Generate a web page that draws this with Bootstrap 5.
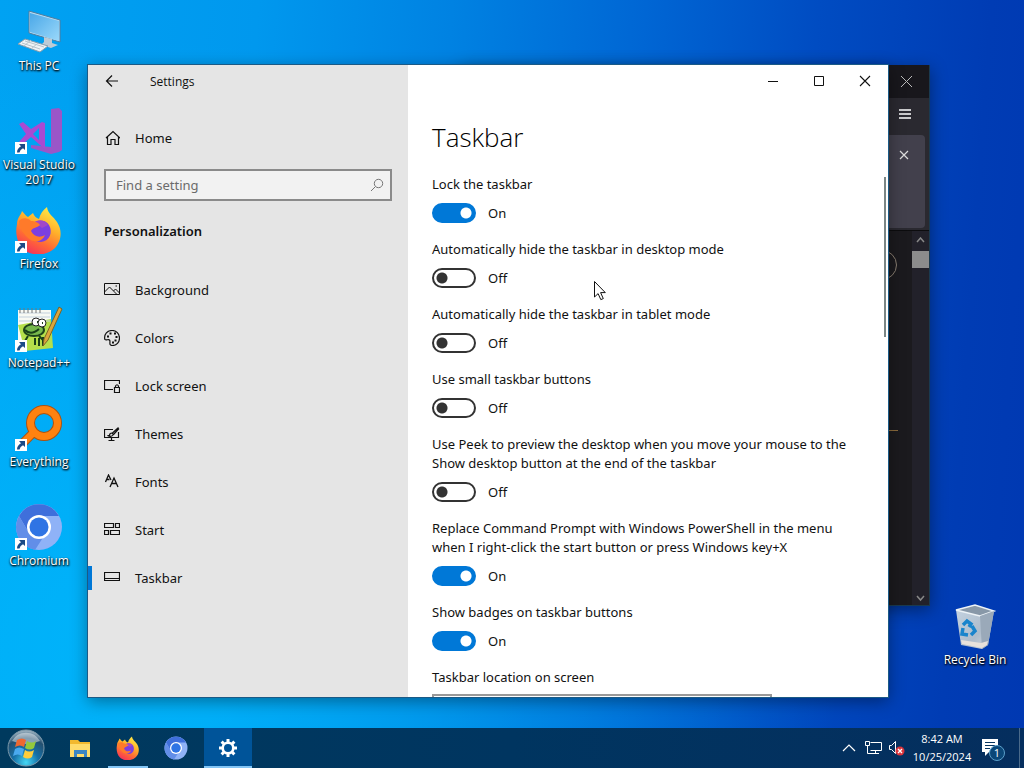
<!DOCTYPE html>
<html lang="en">
<head>
<meta charset="utf-8">
<meta name="viewport" content="width=device-width, initial-scale=1">
<title>Settings</title>
<link href="https://cdn.jsdelivr.net/npm/bootstrap@5.3.0/dist/css/bootstrap.min.css" rel="stylesheet">
<style>
:root { --ui-font: "Noto Sans", "Open Sans", sans-serif; --small-font: "Open Sans", "Noto Sans", sans-serif; --accent: #0078d7; }
body { font-family: var(--ui-font); font-size: 13px; line-height: 19px; color: #111; }
svg { display: block; flex: none; }
button { font: inherit; color: inherit; }
.desktop {
  background:
    radial-gradient(ellipse 68% 80% at 14% 85%, rgba(0,190,255,.7), rgba(0,170,255,0) 100%),
    linear-gradient(94deg, #00a2f2 0%, #0098ee 24%, #0082e2 42%, #0066d4 60%, #004cc2 76%, #003cb4 92%, #0038b2 100%);
}
/* desktop shortcuts */
.shortcut { width: 78px; height: 99px; padding-top: 8px; gap: 2px; font-family: var(--small-font); font-size: 12px; line-height: 15px;
  color: #fff; text-align: center; text-decoration: none; text-shadow: 1px 1px 2px #000, 0 1px 2px #000; }
.shortcut .glyph { position: relative; }
.shortcut .arrow { position: absolute; left: 0; bottom: 1px; }
.bin-spot { right: 10px; bottom: 35px; }
/* windows */
.win { box-shadow: 0 4px 16px rgba(0,0,0,.4); }
.win-back { left: 45%; right: 94px; top: 65px; bottom: 122px; background: #1b1a1e; color: #fbfbfe; border: 1px solid #1a3a50; border-width: 0 1px 1px 0; }
.win-front { left: 88px; right: 136px; top: 65px; bottom: 31px; background: #fff; outline: 1px solid #1b5a86; }
.back-title { height: 33px; background: #18171c; padding-right: 14px; }
.back-bar { height: 37px; background: #2a2930; padding: 9px 15px 0 0; }
.back-tabs { height: 96px; background: #2a2930; padding-right: 4px; border-bottom: 1px solid #0c0c0e; }
.back-card { height: 93px; background: #42404c; border-radius: 4px; padding: 14px 15px 0 0; }
.back-scroll { width: 17px; background: #22212a; padding: 6px 0 3px; }
.back-thumb { height: 17px; background: #8c8c8c; margin-top: 8px; }
.back-ring { width: 30px; height: 30px; border: 1px solid #8a7f72; border-radius: 50%; margin: 19px 15px 0 0; }
.back-rule { width: 34px; height: 1px; background: #8a6a3c; margin: 150px 14px 0 0; }
/* settings */
.side { width: 320px; background: #e5e5e5; }
.side-title { height: 32px; font-family: var(--small-font); font-size: 12px; padding-left: 16px; gap: 30px; }
.side-home { height: 48px; margin-top: 17px; padding-left: 16px; gap: 15px; color: inherit; text-decoration: none; }
.find { height: 32px; margin: 7px 16px 0; border: 2px solid #8a8a8a; background: #f2f2f2; padding: 0 6px 0 10px; }
.find input { border: 0; outline: 0; background: none; font-size: 13px; padding: 0; min-width: 0; }
.find input::placeholder { color: #6b6b6b; }
.side-head { font-size: 13px; font-weight: 600; line-height: 20px; margin: 20px 16px 25px; }
.side-link { height: 48px; padding-left: 12px; gap: 15px; border-left: 4px solid transparent; color: inherit; text-decoration: none; position: relative; }
.side-link.current::before { content: ""; position: absolute; left: -4px; top: 12px; width: 4px; height: 24px; background: var(--accent); }
.cap-btn { width: 46px; height: 32px; border: 0; background: none; padding: 0; }
.pane { padding: 22px 24px 0; }
.pane h1 { font-family: var(--small-font); font-size: 26px; font-weight: 300; line-height: 36px; margin: 0 0 20px; color: #000; }
.setting { margin-bottom: 17px; }
.setting .name { display: block; margin-bottom: 9px; }
.toggle.form-check-input { width: 44px; height: 20px; margin: 0 12px 0 0; float: none; border: 2px solid #333; border-radius: 10px;
  background: radial-gradient(circle at 8px 8px, #333 5px, transparent 6px) #fff; }
.toggle.form-check-input:checked { border-color: var(--accent); background: radial-gradient(circle at 32px 8px, #fff 5px, transparent 6px) var(--accent); }
.place { width: 340px; height: 32px; border: 2px solid #999; border-radius: 0; padding: 0 10px; margin-top: -2px; background-color: #fff; }
.scroll-line { right: 2px; top: 112px; width: 2px; height: 160px; background: #7a8686; }
.pointer { left: 594px; top: 281px; z-index: 5; }
/* taskbar */
.bar { height: 40px; background: linear-gradient(90deg, #003a5e, #003560 50%, #052e5e); color: #fff; font-family: var(--small-font); font-size: 11px; line-height: 18px; }
.bar button { border: 0; background: none; padding: 0; height: 40px; }
.task { width: 48px; position: relative; }
.task.running::after { content: ""; position: absolute; left: 4px; right: 4px; bottom: 0; height: 2px; background: #83c5f5; }
.bar .task.front { background: #005499; }
.task.front::after { left: 0; right: 0; }
.start { width: 52px; }
.tray { width: 24px; }
.bar .clock { width: 66px; }
.bar .notes { width: 36px; }
.peek { width: 5px; border-left: 1px solid #4a6a8a !important; }
</style>
</head>
<body>
<svg width="0" height="0" class="position-absolute" aria-hidden="true">
  <defs>
    <linearGradient id="gScreen" x1="0" y1="0" x2="1" y2="1"><stop offset="0" stop-color="#4aa8e8"/><stop offset="1" stop-color="#9ad8fa"/></linearGradient>
    <linearGradient id="gFox" x1=".8" y1="0" x2=".3" y2="1"><stop offset="0" stop-color="#fff04a"/><stop offset=".4" stop-color="#ffb02a"/><stop offset=".7" stop-color="#ff6a35"/><stop offset="1" stop-color="#f5305c"/></linearGradient>
    <linearGradient id="gBin" x1="0" y1="0" x2="1" y2="1"><stop offset="0" stop-color="#c3d2e0"/><stop offset=".6" stop-color="#aebccb"/><stop offset="1" stop-color="#d9dde2"/></linearGradient>
    <radialGradient id="gOrb" cx=".5" cy=".9" r=".9"><stop offset="0" stop-color="#45d8f5"/><stop offset=".4" stop-color="#1670a8"/><stop offset=".75" stop-color="#245070"/><stop offset="1" stop-color="#a9bdca"/></radialGradient>
    <symbol id="fox" viewBox="0 0 48 48">
      <path d="M2 18C2 12 6 9 7 5c2 2 4 5 6 6l5-4c1 3 3 5 6 6 1-5 4-9 8-12 1 7 6 9 10 15 6 9 4 20-2 26-8 8-23 9-32 1C2 37 0 27 2 18z" fill="url(#gFox)"/>
      <path d="M16 20c4-7 14-7 18-1 4 7 1 16-8 17-7 0-12-5-10-16z" fill="#7b3fe0"/>
      <path d="M20 16q8-4 13 3l-6 3q-4-5-10-2z" fill="#a248c8"/>
      <path d="M4 15c4-4 9-3 12 0 4 0 8 2 9 4-3 3-7 2-9 6 3 6 9 7 14 4-3 8-13 8-18 2-4-4-8-9-8-16z" fill="#ff7a2a"/>
    </symbol>
    <symbol id="chromium" viewBox="0 0 48 48">
      <circle cx="24" cy="24" r="23" fill="#8fb2f7"/>
      <path d="M4 13a23 23 0 0 1 40 0H24l-10 17z" fill="#3f6fdb"/>
      <path d="M4 13a23 23 0 0 0 16 34l9-14-15-3z" fill="#628ee8"/>
      <circle cx="24" cy="24" r="12" fill="#fff"/><circle cx="24" cy="24" r="9.500" fill="#2f74e4"/>
    </symbol>
    <symbol id="link" viewBox="0 0 12 12"><path d="M0 0h12v12H0z" fill="#fff"/><path d="M4 2h6v6L8 6.300Q5 7.500 4.500 10.500H2Q2 6.500 6 4.300z" fill="#1b4a86"/></symbol>
    <symbol id="cross" viewBox="0 0 12 12"><path d="M1 1l10 10M11 1L1 11" stroke="currentColor" fill="none" stroke-width="1.100"/></symbol>
  </defs>
</svg>

<div class="desktop vh-100 d-flex flex-column overflow-hidden">
  <main class="position-relative flex-grow-1 overflow-hidden">
    <nav class="d-flex flex-column" aria-label="Desktop">
      <a href="#" class="shortcut d-flex flex-column align-items-center">
        <span class="glyph"><svg width="48" height="48" viewBox="0 0 48 48"><path d="M14 3l31 9v22L14 25z" fill="#b8dcf2" stroke="#4e7da0"/><path d="M15 5l29 8v20L15 24z" fill="url(#gScreen)"/><path d="M29 29l8 2v4l6 2-7 3-10-3 3-3z" fill="#bccbd6"/><path d="M10 31l23 7-8 6-22-8z" fill="#eef3f6" stroke="#879dac"/><path d="M10 33l19 6M7 35l18 6M16 32l-7 6M23 35l-7 6" stroke="#b8c4cc"/></svg></span>
        This PC</a>
      <a href="#" class="shortcut d-flex flex-column align-items-center">
        <span class="glyph"><svg width="48" height="48" viewBox="0 0 48 48"><path d="M36 2l8-1 3 3v39l-3 2-8 2-20-6v-3l20 2z" fill="#9a56c8"/><path d="M4 17l4-2 8 7 11-7 3 1v26l-5-4-9-8-8 7-4-2 7-8zM24 21l-6 6 6 6z" fill="#a94bd2"/></svg><svg class="arrow" width="12" height="12"><use href="#link"/></svg></span>
        Visual Studio 2017</a>
      <a href="#" class="shortcut d-flex flex-column align-items-center">
        <span class="glyph"><svg width="48" height="48"><use href="#fox"/></svg><svg class="arrow" width="12" height="12"><use href="#link"/></svg></span>
        Firefox</a>
      <a href="#" class="shortcut d-flex flex-column align-items-center">
        <span class="glyph"><svg width="48" height="48" viewBox="0 0 48 48"><path d="M3 5h33v38H3z" fill="#f8faf4"/><path d="M3 20l33-6 2 29-28 3z" fill="#b4df4b"/><path d="M4 8h31M4 12h31M4 16h31" stroke="#c3d0dc"/><path d="M5 3v5m4-5v5m4-5v5m4-5v5m4-5v5m4-5v5" stroke="#777"/><ellipse cx="19" cy="25" rx="10" ry="6" fill="#76b84c" stroke="#1e431a" stroke-width="2"/><circle cx="21" cy="17" r="4" fill="#fff" stroke="#222"/><circle cx="27" cy="18" r="4" fill="#fff" stroke="#222"/><path d="M22 17h1M27 18h1M10 25q6 6 14-1M13 31l-3 5M24 31l4 4M20 40v-7m4 8v-8m4 8v-9" stroke="#183f18" stroke-width="2" fill="none"/><path d="M44 2l3 2-14 31-5 6 1-7z" fill="#dba63c" stroke="#7c6226"/></svg><svg class="arrow" width="12" height="12"><use href="#link"/></svg></span>
        Notepad++</a>
      <a href="#" class="shortcut d-flex flex-column align-items-center">
        <span class="glyph"><svg width="48" height="48" viewBox="0 0 48 48"><path d="M18 29L6 41" stroke="#ad5210" stroke-width="9"/><circle cx="29" cy="19" r="13.500" fill="none" stroke="#ad5210" stroke-width="9"/><path d="M18 29L6 41" stroke="#ff8210" stroke-width="7"/><circle cx="29" cy="19" r="13.500" fill="none" stroke="#ff8210" stroke-width="7"/></svg><svg class="arrow" width="12" height="12"><use href="#link"/></svg></span>
        Everything</a>
      <a href="#" class="shortcut d-flex flex-column align-items-center">
        <span class="glyph"><svg width="48" height="48"><use href="#chromium"/></svg><svg class="arrow" width="12" height="12"><use href="#link"/></svg></span>
        Chromium</a>
    </nav>

    <a href="#" class="shortcut bin-spot position-absolute d-flex flex-column align-items-center">
      <span class="glyph"><svg width="48" height="48" viewBox="0 0 48 48"><path d="M5 8l5 35 21 4 6-4 6-34-18 3z" fill="url(#gBin)"/><path d="M5 8l19-5 19 6-14 5z" fill="#8898a8" stroke="#edf3f7" stroke-width="1.500"/><path d="M29 14l2 33 6-4 6-34z" fill="#9aa9b9"/><path d="M10 38l20 3 7-2-1 4-5 3-20-4z" fill="#e8e2dc"/><path d="M12 23l4-4 4 3-2 3M21 24l3 5-4 4M17 33l-6-1 1-6" fill="none" stroke="#1984cc" stroke-width="3.500"/></svg></span>
      Recycle Bin</a>

    <section class="win win-back position-absolute d-flex flex-column" aria-label="Browser">
      <div class="back-title d-flex justify-content-end align-items-center"><svg width="16" height="13" viewBox="0 0 16 13"><path d="M2 1l11 11M13 1L2 12" stroke="#bbb"/></svg></div>
      <div class="back-bar d-flex justify-content-end"><svg width="16" height="14" viewBox="0 0 16 14"><path d="M1 3h12M1 7h12M1 11h12" stroke="#fff" stroke-width="1.500"/></svg></div>
      <div class="back-tabs"><div class="back-card d-flex justify-content-end"><svg width="12" height="12" viewBox="0 0 12 12"><path d="M2 2l8 8M10 2l-8 8" stroke="#ddd" stroke-width="1.200"/></svg></div></div>
      <div class="flex-grow-1 d-flex justify-content-end">
        <div class="d-flex flex-column align-items-end"><div class="back-ring"></div><div class="back-rule"></div></div>
        <div class="back-scroll d-flex flex-column">
          <svg class="align-self-center" width="9" height="6" viewBox="0 0 9 6"><path d="M1 5l3.500-4L8 5" stroke="#888" fill="none" stroke-width="1.500"/></svg>
          <div class="back-thumb"></div>
          <svg class="align-self-center mt-auto" width="9" height="7" viewBox="0 0 9 7"><path d="M1 1l3.500 4L8 1" stroke="#888" fill="none" stroke-width="1.500"/></svg>
        </div>
      </div>
    </section>

    <section class="win win-front position-absolute d-flex" aria-label="Settings">
      <aside class="side flex-shrink-0">
        <div class="side-title d-flex align-items-center">
          <button type="button" class="border-0 bg-transparent p-0" aria-label="Back"><svg width="16" height="16" viewBox="0 0 16 16"><path d="M14 8H2.500M8 2.500L2.500 8 8 13.500" stroke="#111" fill="none" stroke-width="1.200"/></svg></button>
          <span>Settings</span>
        </div>
        <a href="#" class="side-home d-flex align-items-center"><svg width="16" height="16" viewBox="0 0 16 16"><path d="M2 8l7-6.500L16 8M3.500 6.800V14.500H7V9.500h4v5h3.500V6.800" stroke="#111" fill="none" stroke-width="1.200"/></svg><span>Home</span></a>
        <div class="find d-flex align-items-center">
          <input id="find" class="flex-grow-1" type="text" placeholder="Find a setting" aria-label="Find a setting">
          <svg width="14" height="14" viewBox="0 0 14 14"><circle cx="8.500" cy="5.500" r="4.200" stroke="#777" fill="none"/><path d="M5.500 8.500L1 13" stroke="#777"/></svg>
        </div>
        <h2 class="side-head">Personalization</h2>
        <nav>
          <a href="#" class="side-link d-flex align-items-center"><svg width="16" height="16" viewBox="0 0 16 16"><path d="M.5 1.500h15v11H.5zM.5 10l5-5 7.500 7.500M9.500 9l2-2 4 4" stroke="#111" fill="none"/><path d="M11.500 4h1.500" stroke="#111"/></svg><span>Background</span></a>
          <a href="#" class="side-link d-flex align-items-center"><svg width="16" height="16" viewBox="0 0 16 16"><path d="M.8 9.300C-.2 4 3.500.5 8.200.5c4 0 7.300 3.300 7.300 7.500s-3 7.500-7 7.500c-4.500 0-1.500-4-3-5.500-1.600-1.500-3 1-4.700-.7z" stroke="#111" fill="none" stroke-width="1.200"/><path d="M3 6.500h2M5.500 3.500h2M10 3.500h2M11.500 7h2M10.500 10.500h2M8 12.500h2" stroke="#111" stroke-width="1.800"/></svg><span>Colors</span></a>
          <a href="#" class="side-link d-flex align-items-center"><svg width="16" height="16" viewBox="0 0 16 16"><path d="M9 11.500H.5v-9h15V6M10.500 9.500h5v5h-5zM11.500 9.500V8q1.500-2.500 3 0v1.500" stroke="#111" fill="none" stroke-width="1.200"/></svg><span>Lock screen</span></a>
          <a href="#" class="side-link d-flex align-items-center"><svg width="16" height="16" viewBox="0 0 16 16"><path d="M9 3.500H.5v8h14V6M7.500 11.500v3M4.500 14.500h6M14.500 1.500L8.500 7M15 2.500L9.500 8.500M8 7Q5.500 7 5.500 9.500H3.500q4 2 6-1z" stroke="#111" fill="none" stroke-width="1.200"/></svg><span>Themes</span></a>
          <a href="#" class="side-link d-flex align-items-center"><svg width="16" height="16" viewBox="0 0 16 16"><path d="M1.500 8L4.500 1 7 6M2.500 5.500h3M6 13l4-9 4 9M7.500 9.500h5" stroke="#111" fill="none" stroke-width="1.300"/></svg><span>Fonts</span></a>
          <a href="#" class="side-link d-flex align-items-center"><svg width="16" height="16" viewBox="0 0 16 16"><path d="M.5 1.500h9v4h-9zM11.500 1.500h4v4h-4zM.5 8.500h4v4h-4zM6.500 8.500h9v4h-9z" stroke="#111" fill="none" stroke-width="1.200"/></svg><span>Start</span></a>
          <a href="#" class="side-link current d-flex align-items-center" aria-current="page"><svg width="16" height="16" viewBox="0 0 16 16"><path d="M.5 2.500h15v8H.5zM.5 8.500h15" stroke="#111" fill="none" stroke-width="1.200"/></svg><span>Taskbar</span></a>
        </nav>
      </aside>

      <div class="flex-grow-1 d-flex flex-column overflow-hidden">
        <div class="d-flex justify-content-end flex-shrink-0">
          <button type="button" class="cap-btn d-flex align-items-center justify-content-center" aria-label="Minimize"><svg width="12" height="12" viewBox="0 0 12 12"><path d="M1 6.500h10" stroke="#111"/></svg></button>
          <button type="button" class="cap-btn d-flex align-items-center justify-content-center" aria-label="Maximize"><svg width="12" height="12" viewBox="0 0 12 12"><path d="M1.500 1.500h9v9h-9z" stroke="#111" fill="none"/></svg></button>
          <button type="button" class="cap-btn d-flex align-items-center justify-content-center" aria-label="Close"><svg width="12" height="12"><use href="#cross"/></svg></button>
        </div>
        <div class="pane overflow-hidden">
          <h1>Taskbar</h1>
          <div class="setting"><label class="name" for="t1">Lock the taskbar</label><div class="d-flex align-items-center"><input class="form-check-input toggle" type="checkbox" role="switch" id="t1" checked><span>On</span></div></div>
          <div class="setting"><label class="name" for="t2">Automatically hide the taskbar in desktop mode</label><div class="d-flex align-items-center"><input class="form-check-input toggle" type="checkbox" role="switch" id="t2"><span>Off</span></div></div>
          <div class="setting"><label class="name" for="t3">Automatically hide the taskbar in tablet mode</label><div class="d-flex align-items-center"><input class="form-check-input toggle" type="checkbox" role="switch" id="t3"><span>Off</span></div></div>
          <div class="setting"><label class="name" for="t4">Use small taskbar buttons</label><div class="d-flex align-items-center"><input class="form-check-input toggle" type="checkbox" role="switch" id="t4"><span>Off</span></div></div>
          <div class="setting"><label class="name" for="t5">Use Peek to preview the desktop when you move your mouse to the Show desktop button at the end of the taskbar</label><div class="d-flex align-items-center"><input class="form-check-input toggle" type="checkbox" role="switch" id="t5"><span>Off</span></div></div>
          <div class="setting"><label class="name" for="t6">Replace Command Prompt with Windows PowerShell in the menu when I right-click the start button or press Windows key+X</label><div class="d-flex align-items-center"><input class="form-check-input toggle" type="checkbox" role="switch" id="t6" checked><span>On</span></div></div>
          <div class="setting"><label class="name" for="t7">Show badges on taskbar buttons</label><div class="d-flex align-items-center"><input class="form-check-input toggle" type="checkbox" role="switch" id="t7" checked><span>On</span></div></div>
          <div class="setting"><label class="name" for="place">Taskbar location on screen</label><select id="place" class="place form-select"><option>Bottom</option></select></div>
        </div>
        <div class="scroll-line position-absolute"></div>
      </div>
    </section>

    <svg class="pointer position-absolute" width="13" height="20" viewBox="0 0 13 20"><path d="M.5.5v15.500l3.600-3.400 2.700 6 2.500-1-2.700-6h4.700z" fill="#fff" stroke="#111"/></svg>
  </main>

  <footer class="bar d-flex align-items-center flex-shrink-0">
    <button type="button" class="start d-flex align-items-center justify-content-center me-1" aria-label="Start"><svg width="38" height="38" viewBox="0 0 38 38"><circle cx="19" cy="19" r="18" fill="url(#gOrb)" stroke="#7a98aa"/><path d="M5 12a16 16 0 0 1 28 0Q19 18 5 12z" fill="#fff" opacity=".45"/><path d="M10 11q5-3 9 0l-2 7q-4-3-9 0z" fill="#f06830"/><path d="M20 12q5 3 9 0l-2 7q-4 3-9 0z" fill="#94c93c"/><path d="M8 20q4-3 9 0l-2 7q-4-3-9 0z" fill="#4aa9ef"/><path d="M18 21q4 3 9 0l-2 7q-4 3-9 0z" fill="#ffcd3c"/></svg></button>
    <div class="d-flex">
      <button type="button" class="task d-flex align-items-center justify-content-center" aria-label="File Explorer"><svg width="24" height="24" viewBox="0 0 24 24"><path d="M2 4h8l2 2h10v15H2z" fill="#f2b92f"/><path d="M2 8h20v13H2z" fill="#ffdc6b"/><path d="M6 14h13v7h-3v-3H9v3H6z" fill="#3b86c4"/></svg></button>
      <button type="button" class="task running d-flex align-items-center justify-content-center" aria-label="Firefox"><svg width="24" height="24"><use href="#fox"/></svg></button>
      <button type="button" class="task d-flex align-items-center justify-content-center" aria-label="Chromium"><svg width="24" height="24"><use href="#chromium"/></svg></button>
      <button type="button" class="task running front ms-1 d-flex align-items-center justify-content-center" aria-label="Settings"><svg width="20" height="20" viewBox="0 0 20 20"><circle cx="10" cy="10" r="5.300" fill="none" stroke="#fff" stroke-width="2.600"/><path d="M10 1v3M10 16v3M1 10h3M16 10h3M3.600 3.600l2.200 2.200M14.200 14.200l2.200 2.200M3.600 16.400l2.200-2.200M14.200 5.800l2.200-2.200" stroke="#fff" stroke-width="3"/></svg></button>
    </div>
    <div class="ms-auto d-flex align-items-center">
      <button type="button" class="tray d-flex align-items-center justify-content-center" aria-label="Show hidden icons"><svg width="14" height="8" viewBox="0 0 14 8"><path d="M1 7l6-6 6 6" stroke="#fff" fill="none" stroke-width="1.200"/></svg></button>
      <button type="button" class="tray d-flex align-items-center justify-content-center" aria-label="Network"><svg width="17" height="16" viewBox="0 0 17 16"><path d="M5.500 2.500h11v8h-11M10.500 10.500v3M7 13.500h7M.5 1.500h4v4h-4zM2.500 5.500v8H7" stroke="#fff" fill="none"/></svg></button>
      <button type="button" class="tray d-flex align-items-center justify-content-center" aria-label="Volume"><svg width="18" height="16" viewBox="0 0 18 16"><path d="M1.500 5.500h2l4-4v12l-4-4h-2z" stroke="#fff" fill="none"/><circle cx="12" cy="11" r="4.500" fill="#d9343c"/><path d="M10 9l4 4M14 9l-4 4" stroke="#fff" stroke-width="1.300"/></svg></button>
      <button type="button" class="clock text-nowrap">8:42 AM<br>10/25/2024</button>
      <button type="button" class="notes me-1 d-flex align-items-center justify-content-center" aria-label="Notifications, 1 new"><svg width="24" height="26" viewBox="0 0 24 26"><path d="M1 4h16v13H8l-4 4v-4H1z" fill="#fff"/><path d="M4 7.500h10M4 10.500h10M4 13.500h5" stroke="#06345f"/><circle cx="16" cy="18" r="7.500" fill="#0b4778" stroke="#5b9fca"/><text x="16" y="22" text-anchor="middle" font-size="11" font-family="Open Sans, sans-serif" fill="#fff">1</text></svg></button>
      <button type="button" class="peek ms-1" aria-label="Show desktop"></button>
    </div>
  </footer>
</div>
<script src="https://cdn.jsdelivr.net/npm/bootstrap@5.3.0/dist/js/bootstrap.bundle.min.js"></script>
</body>
</html>
